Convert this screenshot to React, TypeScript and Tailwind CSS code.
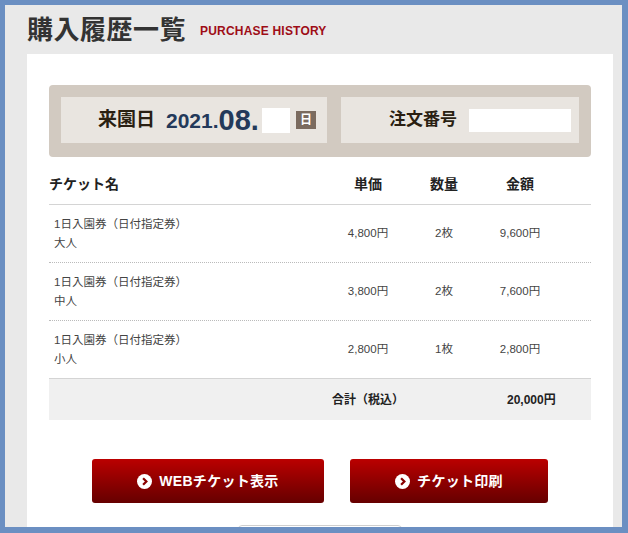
const jp = '"Liberation Sans", "Noto Sans CJK JP", sans-serif';

interface Item {
  name: string;
  kind: string;
  price: string;
  qty: string;
  amount: string;
}

const items: Item[] = [
  { name: '1日入園券（日付指定券）', kind: '大人', price: '4,800円', qty: '2枚', amount: '9,600円' },
  { name: '1日入園券（日付指定券）', kind: '中人', price: '3,800円', qty: '2枚', amount: '7,600円' },
  { name: '1日入園券（日付指定券）', kind: '小人', price: '2,800円', qty: '1枚', amount: '2,800円' },
];

function ArrowCircle() {
  return (
    <svg width="15" height="15" viewBox="0 0 16 16" className="shrink-0">
      <circle cx="8" cy="8" r="8" fill="#fff" />
      <path d="M6.5 4.5 L10 8 L6.5 11.5" fill="none" stroke="#8a0000" strokeWidth="2.4" />
    </svg>
  );
}

function RedButton({ label, width }: { label: string; width: string }) {
  return (
    <button
      className={`${width} h-[44px] flex items-center justify-center gap-[7px] rounded-[3px] bg-gradient-to-b from-[#bb0000] to-[#660000] text-white text-[14px] font-bold`}
    >
      <ArrowCircle />
      <span className="tracking-[0.3px]">{label}</span>
    </button>
  );
}

export default function App() {
  return (
    <div
      className="w-[628px] h-[533px] overflow-hidden border-[#6b8fc2] border-t-[5px] border-l-[5px] border-r-[6px] border-b-[6px] bg-[#e9e9e9]"
      style={{ fontFamily: jp }}
    >
      {/* page heading */}
      <div className="h-[49px] pl-[22px] flex items-center gap-[14px] pt-[2px]">
        <h1 className="text-[26px] font-bold text-[#333] tracking-[0.5px]">購入履歴一覧</h1>
        <span className="text-[12px] font-bold text-[#9e0d17] mt-[1px] tracking-[0.2px]">PURCHASE HISTORY</span>
      </div>

      <div className="ml-[22px] w-[586px] bg-white px-[22px] pt-[31px] h-[600px]">
        {/* visit date / order number */}
        <div className="rounded-[4px] bg-[#d2cac1] p-[12px] pb-[14px] flex gap-[14px]">
          <div className="w-[266px] h-[46px] bg-[#e9e5e0] flex items-center pl-[37px]">
            <span className="text-[19px] font-bold text-[#2a1f12]">来園日</span>
            <span className="ml-[11px] text-[21px] font-bold text-[#23395a] leading-none">2021.</span>
            <span className="text-[29px] font-bold text-[#23395a] leading-none">08.</span>
            <span className="ml-[3px] w-[28px] h-[25px] bg-white" />
            <span className="ml-[6px] w-[20px] h-[18px] bg-[#7b6b5f] text-white text-[12px] font-bold flex items-center justify-center">
              日
            </span>
          </div>
          <div className="flex-1 h-[46px] bg-[#e9e5e0] flex items-center pl-[48px]">
            <span className="text-[17px] font-bold text-[#2a1f12]">注文番号</span>
            <span className="ml-[12px] w-[102px] h-[23px] bg-white" />
          </div>
        </div>

        {/* ticket table */}
        <div className="mt-[13px] text-[#444]">
          <div className="h-[35px] pb-[6px] flex items-center border-b border-[#d4d4d4] text-[14px] font-bold text-[#222]">
            <div className="flex-1">チケット名</div>
            <div className="w-[80px] text-center">単価</div>
            <div className="w-[72px] text-center">数量</div>
            <div className="w-[80px] text-center">金額</div>
            <div className="w-[31px]" />
          </div>
          {items.map((it, i) => (
            <div
              key={i}
              className={`h-[58px] flex items-center text-[11.5px] ${
                i < items.length - 1 ? 'border-b border-dotted border-[#bbb]' : 'border-b border-[#d4d4d4]'
              }`}
            >
              <div className="flex-1 pl-[5px] leading-[19px]">
                <div>{it.name}</div>
                <div>{it.kind}</div>
              </div>
              <div className="w-[80px] text-center">{it.price}</div>
              <div className="w-[72px] text-center">{it.qty}</div>
              <div className="w-[80px] text-center">{it.amount}</div>
              <div className="w-[31px]" />
            </div>
          ))}
          <div className="h-[41px] bg-[#f0f0f0] flex items-center text-[12px] font-bold text-[#222]">
            <div className="flex-1" />
            <div className="w-[80px] text-center whitespace-nowrap">合計（税込）</div>
            <div className="w-[99px]" />
            <div className="w-[84px]">20,000円</div>
          </div>
        </div>

        {/* actions */}
        <div className="mt-[39px] flex justify-center gap-[26px]">
          <RedButton label="WEBチケット表示" width="w-[232px]" />
          <RedButton label="チケット印刷" width="w-[198px]" />
        </div>
        <div className="mt-[22px] mx-auto w-[164px] h-[40px] rounded-[4px] border border-[#cfcfcf] bg-white" />
      </div>
    </div>
  );
}
